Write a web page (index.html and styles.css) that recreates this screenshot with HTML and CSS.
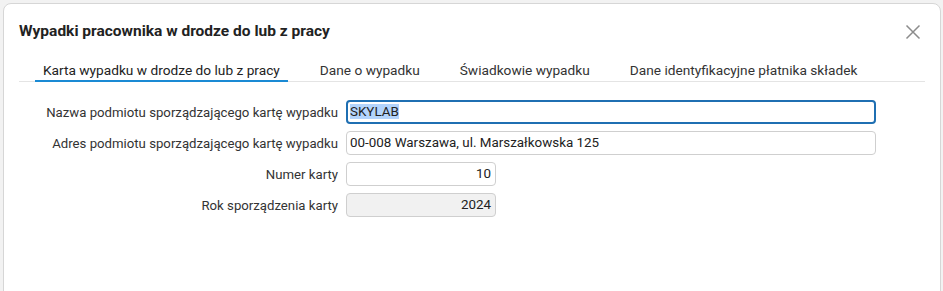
FILE: index.html
```html
<!DOCTYPE html>
<html lang="pl">
<head>
<meta charset="utf-8">
<link rel="stylesheet" href="styles.css">
</head>
<body>
<div class="modal">
  <div class="header">
    <h1 class="title">Wypadki pracownika w drodze do lub z pracy</h1>
    <svg class="close" width="16" height="16" viewBox="0 0 16 16"><path d="M1.5 1.5L14.5 14.5M14.5 1.5L1.5 14.5" stroke="#8c8c8c" stroke-width="1.5" fill="none"/></svg>
  </div>
  <div class="tabs">
    <div class="tab active">Karta wypadku w drodze do lub z pracy</div>
    <div class="tab">Dane o wypadku</div>
    <div class="tab">Świadkowie wypadku</div>
    <div class="tab">Dane identyfikacyjne płatnika składek</div>
  </div>
  <div class="form">
    <div class="label">Nazwa podmiotu sporządzającego kartę wypadku</div>
    <div class="field wide focus"><span class="sel">SKYLAB</span></div>
    <div class="label">Adres podmiotu sporządzającego kartę wypadku</div>
    <div class="field wide">00-008 Warszawa, ul. Marszałkowska 125</div>
    <div class="label">Numer karty</div>
    <div class="field short num">10</div>
    <div class="label">Rok sporządzenia karty</div>
    <div class="field short num disabled">2024</div>
  </div>
</div>
</body>
</html>
```
FILE: styles.css
```css
html, body { margin: 0; padding: 0; }
body {
  background: #f2f2f2;
  font-family: Roboto, "Liberation Sans", sans-serif;
  color: #222;
  width: 943px;
  height: 291px;
  overflow: hidden;
}
.modal {
  margin: 3px 0 0 3px;
  width: 936px;
  height: 300px;
  background: #fff;
  border: 1px solid #d6d6d6;
  border-radius: 8px;
  box-sizing: content-box;
}
.header {
  display: flex;
  align-items: center;
  justify-content: space-between;
  padding: 17px 19px 0 15px;
}
.title {
  margin: 0;
  font-size: 15.5px;
  font-weight: 700;
  line-height: 20px;
  color: #222;
}
.close { display: block; margin-top: 1px; }
.tabs {
  display: flex;
  gap: 24px;
  margin: 20px 15px 0 15px;
  padding-left: 16px;
  border-bottom: 1px solid #e4e4e4;
}
.tab {
  padding: 0 8px 1px 8px;
  font-size: 13.7px;
  line-height: 18px;
  color: #333;
  border-bottom: 2px solid transparent;
  margin-bottom: -1px;
}
.tab.active { border-bottom-color: #1a8ad4; color: #222; }
.form {
  display: grid;
  grid-template-columns: 319px auto;
  column-gap: 8px;
  row-gap: 7px;
  padding: 18px 15px 0 15px;
  align-items: center;
  justify-items: start;
}
.label {
  justify-self: end;
  font-size: 13.2px;
  color: #333;
}
.field {
  box-sizing: border-box;
  height: 24px;
  border: 1px solid #cfcfcf;
  border-radius: 4px;
  padding: 0 4px 0 3px;
  font-size: 13.4px;
  line-height: 22px;
  color: #222;
  background: #fff;
}
.field.wide { width: 530px; }
.field.short { width: 150px; }
.field.num { text-align: right; }
.field.disabled { background: #f1f1f1; }
.field.focus { border: 2px solid #1f6fb2; padding: 0 2px; line-height: 20px; }
.sel { background: #b3d4fc; }
```
